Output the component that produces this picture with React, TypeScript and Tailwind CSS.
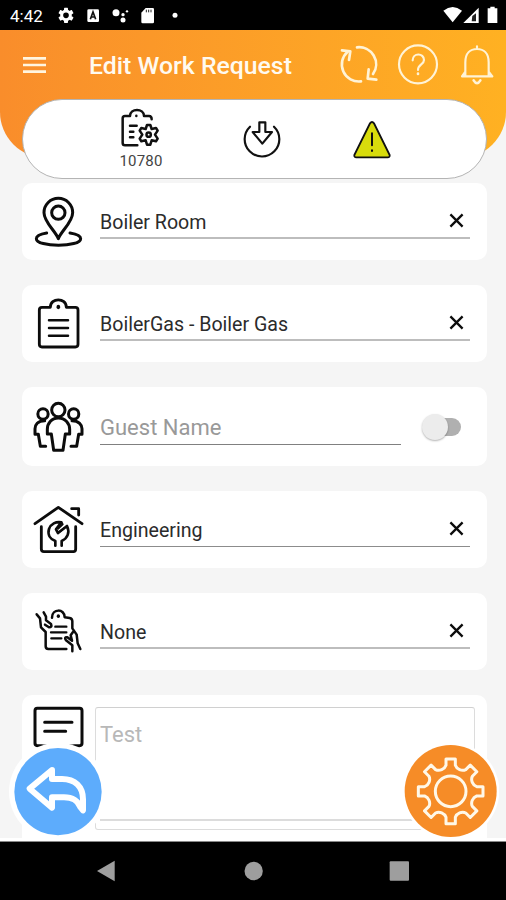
import React from "react";

const line = {
  fill: "none",
  stroke: "currentColor",
  strokeLinecap: "round" as const,
  strokeLinejoin: "round" as const,
};

function StatusBar() {
  return (
    <div className="flex h-[30px] shrink-0 items-center bg-black pr-[7px] pl-[10px] text-white">
      <span className="w-[34px] pt-[1px] text-[17px] leading-[30px] whitespace-nowrap">4:42</span>
      <svg className="ml-[10px] h-[24px] w-[134px]" viewBox="162 9 402 72" fill="#fff">
        <g transform="translate(198 46)">
          <circle r="13" fill="none" stroke="#fff" strokeWidth="9" />
          {[0, 60, 120, 180, 240, 300].map((a) => (
            <rect key={a} x="-6" y="-23" width="12" height="9" rx="2" transform={`rotate(${a})`} />
          ))}
        </g>
        <rect x="262" y="28" width="35" height="38" rx="4" />
        <path d="M271 58L279 36L287 58M274 51H284" fill="none" stroke="#111" strokeWidth="5" />
        <circle cx="348" cy="38" r="10.5" />
        <circle cx="369" cy="44" r="5" />
        <circle cx="369" cy="60" r="7.5" />
        <circle cx="381" cy="34" r="3.5" />
        <path d="M437 24H458Q462 24 462 28V66Q462 70 458 70H428Q424 70 424 66V38Z" />
        <path d="M439 29V37M446 29V37M453 29V37" stroke="#222" strokeWidth="3" />
        <circle cx="525" cy="46" r="7.5" />
      </svg>
      <svg className="ml-auto h-[24px] w-[56px]" viewBox="570 9 168 72" fill="#fff">
        <path d="M571 32Q599 10 627 32L599 67Z" />
        <path d="M631 69L677 23V69Z" />
        <path d="M658 48L669 40V64H656Z" fill="#222" />
        <path d="M712 20H725V25H733V69H704V25H712Z" />
      </svg>
    </div>
  );
}

function Header() {
  return (
    <header className="relative z-10 h-[128px] shrink-0 rounded-b-[46px] bg-linear-to-r from-[#f98d2b] to-[#ffb122]">
      <div className="flex h-[69px] items-center">
        <svg className="ml-[22px] h-[30px] w-[26px] text-[#fff5e0]" viewBox="66 147 78 90">
          <path d="M69 172H138M69 192H138M69 212H138" {...line} strokeLinecap="butt" strokeWidth="8" />
        </svg>
        <h1 className="ml-[41px] w-[205px] pt-[2px] text-[24.8px] leading-[30px] font-medium whitespace-nowrap text-[#fffaf0]">
          Edit Work Request
        </h1>
        <svg className="ml-[43px] h-[50px] w-[166px] text-[#fff3d6]" viewBox="252 119 498 150">
          <g {...line} strokeWidth="8">
            <path d="M312 141A51 51 0 0 1 360 221M324 243A51 51 0 0 1 284 154" />
            <path d="M267 150L292 153L288 179M347 207L344 235L370 238" />
            <circle cx="495" cy="192" r="57" strokeWidth="6.5" />
            <path d="M479 180C479 157 513 157 513 179C513 193 495 192 495 209" strokeWidth="6.5" />
            <path d="M495 220V221" />
            <path d="M637 228V186C637 159 652 146 672 146S707 159 707 186V228M627 228H718M637 214L627 228M707 214L718 228M672 138V145" strokeWidth="6.5" />
            <path d="M662 240Q672 257 682 240" />
          </g>
        </svg>
      </div>
      <div className="ml-[22px] flex h-[80px] w-[465px] justify-start rounded-[40px] border border-[#b4b4b4] bg-white">
        <div className="ml-[85px] flex w-[66px] flex-col items-center pt-[7px]">
          <svg className="h-[42px] w-[42px] text-[#111]" viewBox="361 50 126 126">
            <g {...line} strokeWidth="7.5">
              <path d="M413 165H376Q369 165 369 158V84Q369 77 376 77H391C391 53 433 53 433 77H448Q456 77 456 87" />
              <path d="M410 76V77M391 106H411M391 124H401M391 141H401" />
              <path d="M442 104H452L456 116L469 113L474 121L466 133L474 145L469 153L456 150L452 163H442L438 150L425 153L420 145L428 133L420 121L425 113L438 116Z" />
              <circle cx="447" cy="133" r="6.5" />
            </g>
          </svg>
          <span className="mt-[3px] text-[15px] leading-[18px] tracking-[0.2px] text-[#444]">10780</span>
        </div>
        <svg className="mt-[17px] ml-[66px] h-[44px] w-[44px] text-[#111]" viewBox="-39 80 132 132">
          <g {...line} strokeWidth="6.5">
            <path d="M63 109A52 52 0 1 1 -9 109" />
            <path d="M19 96H37V125H57L28 160L-1 125H19Z" />
          </g>
        </svg>
        <svg className="mt-[17px] ml-[66px] h-[44px] w-[44px] text-[#111]" viewBox="291 80 132 132">
          <path d="M351 99Q357 91 363 99L410 194Q411 201 404 201H310Q303 201 304 194Z" fill="#d8dc0c" stroke="currentColor" strokeWidth="5.5" />
          <path d="M357 129V165M357 180V182" {...line} strokeWidth="6" />
        </svg>
      </div>
    </header>
  );
}

function Card({ icon, className, children }: { icon: React.ReactNode; className: string; children: React.ReactNode }) {
  return (
    <section className={`flex w-[465px] shrink-0 items-start rounded-[10px] bg-white pl-[10px] text-[#0c0c0c] ${className}`}>
      {icon}
      {children}
    </section>
  );
}

function Field({ value, className }: { value: string; className: string }) {
  return (
    <div className={`ml-[16px] flex w-[370px] items-end justify-between ${className}`}>
      <span className="mb-[2px] text-[19.6px] leading-[24px] whitespace-nowrap text-[#2b2b2b]">{value}</span>
      <svg className="mr-[6px] mb-[9px] h-[15px] w-[15px]" viewBox="0 0 15 15">
        <path d="M1.4 1.4L13.6 13.6M13.6 1.4L1.4 13.6" {...line} strokeLinecap="butt" strokeWidth="2.3" />
      </svg>
    </div>
  );
}

function LocationIcon() {
  return (
    <svg className="h-[77px] w-[52px]" viewBox="36 9 156 231">
      <g {...line} strokeWidth="9">
        <path d="M115 176C107 154 72 126 72 98A43 43 0 0 1 158 98C158 126 123 154 115 176Z" />
        <circle cx="115" cy="98" r="20" />
        <path d="M80 159C62 162 49 168 49 176C49 202 182 202 182 176C182 168 168 162 150 159" />
      </g>
    </svg>
  );
}

function ClipboardIcon() {
  return (
    <svg className="h-[77px] w-[52px]" viewBox="36 315 156 231">
      <g {...line} strokeWidth="8.5">
        <path d="M91 382H66Q58 382 58 390V493Q58 501 66 501H166Q174 501 174 493V390Q174 382 166 382H139C139 352 91 352 91 382Z" />
        <path d="M115 380V382" strokeWidth="11" />
        <path d="M87 421H144M87 444H144M87 467H144" strokeWidth="7.5" />
      </g>
    </svg>
  );
}

function PeopleIcon() {
  return (
    <svg className="h-[79px] w-[52px]" viewBox="36 6 156 237">
      <g {...line} strokeWidth="9">
        <circle cx="115" cy="75" r="20" />
        <circle cx="69" cy="87" r="15.5" />
        <circle cx="161" cy="87" r="15.5" />
        <path d="M115 99C94 99 82 115 82 133V147H94L101 196H129L136 147H149V133C149 115 136 99 115 99Z" />
        <path d="M74 107C53 107 45 120 45 131V148H55L61 184H77M156 107C177 107 186 120 186 131V148H176L170 184H153" />
      </g>
    </svg>
  );
}

function HouseWrenchIcon() {
  return (
    <svg className="h-[77px] w-[52px]" viewBox="36 318 156 231">
      <g {...line} strokeWidth="8.5">
        <path d="M45 416L115 367L186 416M155 371H176V390" />
        <path d="M64 425V492Q64 500 72 500H160Q167 500 167 492V425" />
        <path d="M106 482V468C90 462 82 449 87 432C92 417 108 409 124 412L108 433L114 444L141 423C150 442 143 460 125 468V482" strokeWidth="8" />
        <path d="M124 412L128 418L114 431M114 444L132 430" strokeWidth="6" />
      </g>
    </svg>
  );
}

function HandoverIcon() {
  return (
    <svg className="h-[77px] w-[52px]" viewBox="36 9 156 231">
      <g {...line} strokeWidth="7.5">
        <path d="M96 83C96 55 134 55 134 82L149 84Q157 86 157 94V115L170 134L173 160L181 177" />
        <path d="M115 78V79" strokeWidth="10" />
        <path d="M50 73L60 85L63 112L77 126V169Q77 177 85 177H139" />
        <path d="M71 67L78 80V91L93 102Q97 112 87 112L75 104" />
        <path d="M106 110H139M93 127H139M94 145H124" strokeWidth="7" />
        <path d="M157 184V166L138 151Q131 141 142 142L156 152L152 136L159 126" />
      </g>
    </svg>
  );
}

function NoteIcon() {
  return (
    <svg className="h-[77px] w-[52px]" viewBox="36 315 156 231">
      <g {...line} strokeWidth="9">
        <rect x="45" y="355" width="141" height="112" rx="7" />
        <path d="M74 397H156M74 424H137" />
      </g>
    </svg>
  );
}

function gearPath(cx: number, cy: number) {
  const parts: string[] = [];
  for (let i = 0; i < 8; i++) {
    const base = (i * Math.PI) / 4 - Math.PI / 2;
    const at = (angle: number, r: number, side: number) => {
      const x = cx + r * Math.cos(angle) - side * Math.sin(angle);
      const y = cy + r * Math.sin(angle) + side * Math.cos(angle);
      return `${x.toFixed(1)} ${y.toFixed(1)}`;
    };
    parts.push(`${i === 0 ? "M" : "L"}${at(base, 78, -14)}L${at(base, 97, -14)}L${at(base, 97, 14)}L${at(base, 78, 14)}`);
    // rounded valley between neighbouring teeth
    const next = base + Math.PI / 4;
    parts.push(`C${at(base, 66, 18)} ${at(next, 66, -18)} ${at(next, 78, -14)}`);
  }
  return parts.join("") + "Z";
}

function FloatingButtons() {
  return (
    <>
      <button aria-label="Back" className="absolute top-[713px] left-[9px] z-20 h-[98px] w-[98px]">
        <svg className="h-[98px] w-[98px]" viewBox="27 159 294 294">
          <circle cx="174" cy="305" r="147" fill="#fff" />
          <circle cx="174" cy="305" r="131" fill="#5dacfc" />
          <path
            d="M156 240L89 296L156 353V322H192C219 322 235 335 240 350L249 361V328C249 290 225 267 186 267H156Z"
            fill="none"
            stroke="#fff"
            strokeWidth="18"
            strokeLinejoin="round"
          />
        </svg>
      </button>
      <button aria-label="Settings" className="absolute top-[712px] left-[401px] z-20 h-[98px] w-[98px]">
        <svg className="h-[98px] w-[98px]" viewBox="63 156 294 294">
          <circle cx="212" cy="303" r="146" fill="#fff" />
          <circle cx="212" cy="303" r="138" fill="#f68c27" />
          <g fill="none" stroke="#fff8e8" strokeWidth="9" strokeLinejoin="round">
            <path d={gearPath(212, 304)} />
            <circle cx="212" cy="304" r="46" />
          </g>
        </svg>
      </button>
    </>
  );
}

export default function App() {
  return (
    <div className="flex h-[900px] w-[506px] flex-col overflow-hidden bg-black font-['Roboto',sans-serif]">
      <StatusBar />
      <main className="relative flex h-[812px] shrink-0 flex-col overflow-hidden border-b border-[#888] bg-white">
        <div className="flex h-[808px] shrink-0 flex-col overflow-hidden bg-[#f5f5f5]">
          <Header />
          <div className="mt-[25px] ml-[22px] flex flex-col gap-[25px]">
            <Card className="h-[77px]" icon={<LocationIcon />}>
              <Field className="h-[56px] border-b-2 border-[#bdbdbd]" value="Boiler Room" />
            </Card>
            <Card className="h-[77px]" icon={<ClipboardIcon />}>
              <Field className="h-[56px] border-b-2 border-[#bdbdbd]" value="BoilerGas - Boiler Gas" />
            </Card>
            <Card className="h-[79px]" icon={<PeopleIcon />}>
              <div className="ml-[16px] flex h-[58px] w-[301px] items-end border-b border-[#808080] pb-[3px]">
                <span className="text-[22px] leading-[26px] whitespace-nowrap text-[#999]">Guest Name</span>
              </div>
              <div className="mt-[27px] ml-[22px] flex h-[26px] w-[41px] items-center">
                <div className="z-10 -ml-[1px] h-[26px] w-[26px] shrink-0 rounded-full bg-[#ececec] shadow-[0_1px_2px_rgba(0,0,0,0.3)]" />
                <div className="-ml-[24px] h-[18px] w-[37px] shrink-0 rounded-full bg-[#b0b0b0]" />
              </div>
            </Card>
            <Card className="h-[77px]" icon={<HouseWrenchIcon />}>
              <Field className="h-[56px] border-b border-[#8c8c8c] pb-[1px]" value="Engineering" />
            </Card>
            <Card className="h-[77px]" icon={<HandoverIcon />}>
              <Field className="h-[56px] border-b-2 border-[#bdbdbd]" value="None" />
            </Card>
            <Card className="h-[160px]" icon={<NoteIcon />}>
              <div className="mt-[12px] ml-[11px] h-[123px] w-[380px] rounded-[3px] border border-[#dcdcdc] border-t-[#d0d0d0]">
                <div className="mx-[4px] h-[113px] border-b-2 border-[#dcdcdc] pt-[14px] text-[22px] leading-[26px] text-[#b8b8b8]">
                  Test
                </div>
              </div>
            </Card>
          </div>
        </div>
        <FloatingButtons />
      </main>
      <nav className="flex h-[58px] shrink-0 items-center bg-black px-[96px]">
        <svg className="h-[24px] w-[314px]" viewBox="108 87 942 72" fill="#9e9e9e">
          <path d="M111 123L164 92V154Z" />
          <circle cx="581" cy="123" r="27.5" />
          <rect x="989" y="94" width="58" height="58" rx="3" />
        </svg>
      </nav>
    </div>
  );
}
